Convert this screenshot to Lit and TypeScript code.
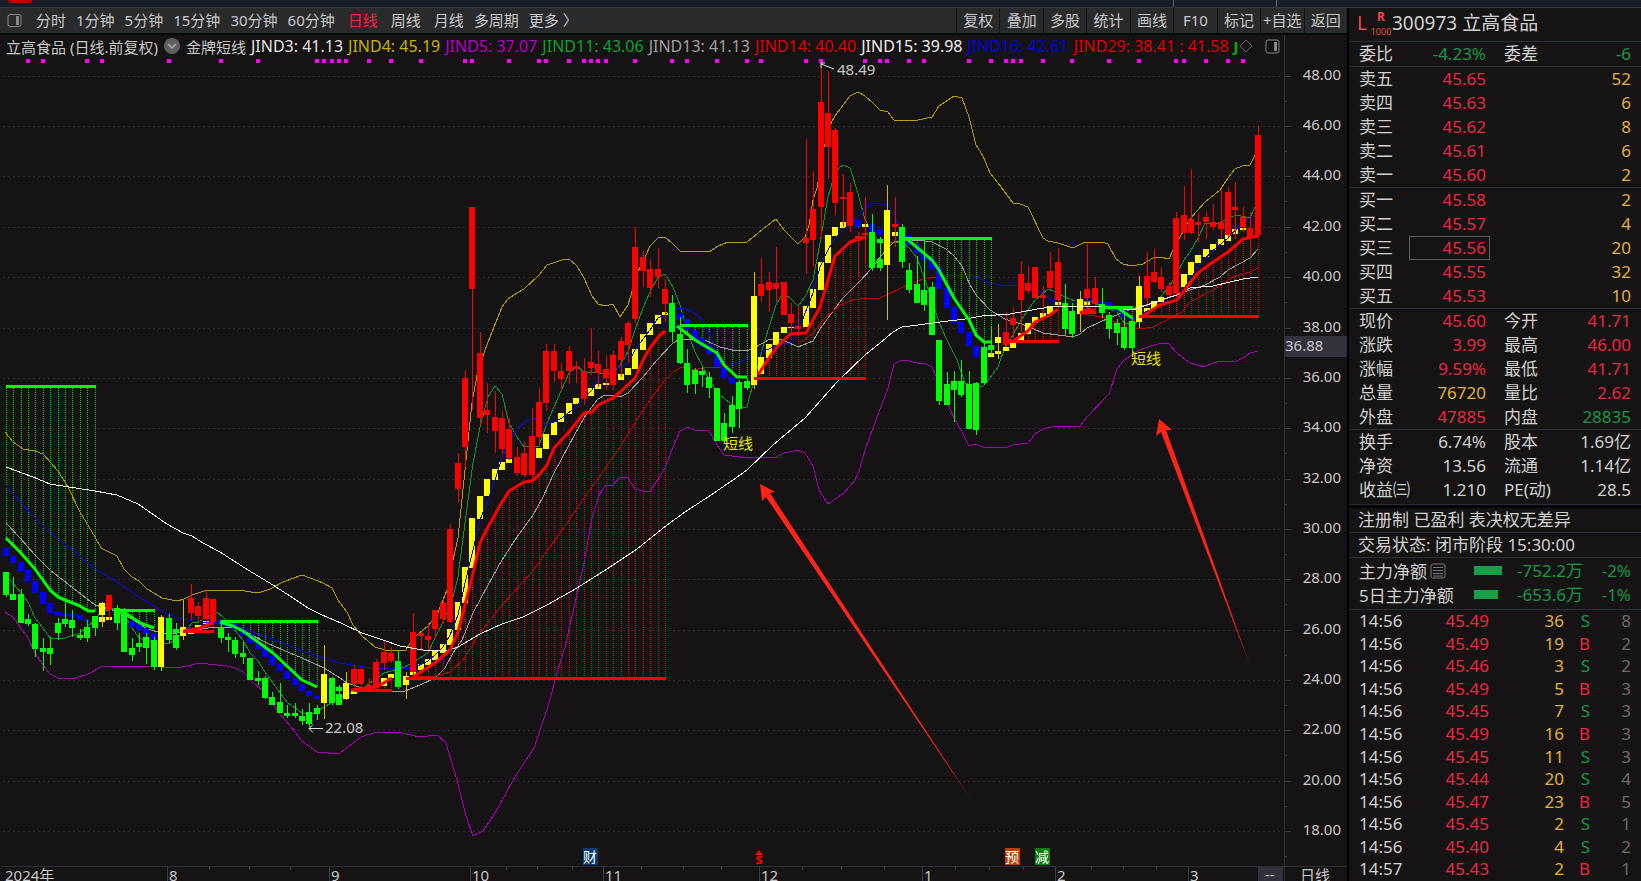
import { LitElement, html, svg, css } from "lit";
import { customElement } from "lit/decorators.js";

type Kind = "R" | "G" | "Y" | "B";

const COLORS: Record<Kind, string> = { R: "#ff0000", G: "#00ff00", Y: "#ffff00", B: "#0000ff" };

const barX = (i: number) => Math.round(5.7 + i * 7.408);
const priceY = (p: number) => Math.round(75.7 + (48 - p) * 25.18);

/* One candle per trading day: kind, high, body top, body bottom, low (canvas units). */
const CANDLES: [Kind, number, number, number, number][] = `
G 572 572 595 597|G 577 594 600 600|G 589 594 623 623|G 614 619 624 626|G 623 624 649 657|G 638 648 652 671
G 637 648 654 665|G 618 623 633 640|G 600 619 624 627|G 610 620 628 637|G 629 635 638 640|G 620 627 638 642
G 616 616 628 636|Y 602 603 615 627|R 595 595 610 620|G 605 608 623 630|G 608 613 652 652|G 638 648 655 661
G 633 643 647 652|G 633 637 648 664|G 637 640 667 670|Y 615 617 667 671|G 614 618 640 643|G 623 635 648 650
Y 600 627 636 640|R 584 598 613 620|R 602 606 616 622|R 590 598 619 625|R 599 599 622 625|G 623 627 638 643
G 633 637 640 652|G 637 640 654 658|G 642 653 657 664|G 658 658 680 680|G 671 678 681 685|G 676 678 698 699
G 692 697 705 705|G 683 702 713 713|G 705 713 716 718|G 703 713 716 718|G 709 716 721 725|G 703 712 724 727
G 705 708 714 720|Y 645 674 703 719|G 677 678 703 705|G 685 694 705 705|Y 672 683 699 700|R 665 669 684 690
R 668 669 684 688|R 678 685 687 692|R 659 662 687 688|R 640 652 663 670|R 647 653 661 663|G 650 661 687 689
Y 672 676 685 699|R 613 632 672 675|R 632 633 636 651|R 623 636 640 652|R 610 610 629 639|R 599 603 619 623
R 524 529 622 623|R 453 463 489 503|R 370 378 447 467|R 207 207 289 410|R 332 353 418 425|R 383 410 415 433
R 391 417 431 453|R 411 418 449 454|R 418 429 458 460|R 447 457 473 476|R 442 453 475 477|R 408 436 475 480
R 388 402 437 445|R 344 351 403 411|R 344 351 371 382|R 363 371 379 390|R 346 351 371 384|R 361 366 369 383
R 358 371 399 405|R 328 362 368 375|R 351 364 373 387|R 355 369 378 390|R 351 355 385 390|R 337 341 360 377
R 321 323 345 363|R 227 247 319 323|R 251 257 271 287|R 259 269 288 297|R 248 269 277 288|R 279 289 304 322
G 295 303 332 342|G 317 334 363 364|G 349 363 385 393|G 368 370 384 394|G 367 371 375 387|G 372 377 388 398
G 388 388 441 441|G 413 423 441 443|G 396 405 427 433|G 380 382 409 428|G 378 381 388 390|Y 272 296 385 389
R 258 284 296 302|R 272 282 290 312|R 247 283 289 302|R 282 282 315 315|R 303 314 323 333|R 306 326 329 333
R 139 238 243 274|R 171 209 240 267|R 66 102 207 238|R 71 113 147 179|R 128 130 203 215|R 174 197 199 227
R 183 192 226 232|R 232 236 241 278|R 197 233 235 263|G 214 232 268 271|G 237 259 268 271|Y 185 210 265 320
R 197 224 227 247|G 224 227 262 268|G 263 270 290 293|G 256 284 303 303|G 240 290 305 311|G 282 287 335 335
G 340 340 401 405|G 372 384 405 405|G 371 381 390 422|G 360 381 395 397|G 371 384 429 429|G 382 383 430 435
G 340 347 383 385|G 327 345 350 355|Y 324 337 343 359|R 312 332 345 347|R 307 318 325 338|R 261 274 300 335
R 266 283 291 294|R 267 267 298 298|R 286 295 298 315|R 252 271 288 290|R 248 262 300 308|G 284 303 329 336
G 303 311 334 338|Y 291 299 314 332|R 244 289 298 310|R 277 288 304 310|G 288 304 313 318|G 312 315 329 339
G 319 323 333 345|G 314 327 348 350|G 317 321 348 357|Y 276 286 322 328|R 252 276 298 307|R 249 272 282 283
R 267 277 289 292|R 282 286 295 298|R 212 218 294 297|R 186 215 233 240|R 169 219 233 234|R 213 222 225 242
R 212 217 222 239|R 204 222 227 230|R 190 222 229 238|R 187 192 235 237|R 182 207 210 239|R 207 217 227 232
R 212 228 237 257|R 126 135 235 237`
  .trim()
  .split(/[|\n]/)
  .map((row) => {
    const [k, ...n] = row.split(" ");
    const [a, b, c, d] = n.map(Number);
    return [k as Kind, a, b, c, d];
  });

/* Trend steps: day index, kind, top, bottom. */
const STEPS: [number, Kind, number, number][] = `
0 B 548 556|1 B 556 563|2 B 562 571|3 B 570 581|4 B 581 593|5 B 592 604|6 B 603 613|7 B 612 615|8 B 614 616|9 B 614 617|10 B 615 620|11 B 619 622
13 Y 617 622|14 Y 617 620|17 B 621 627|18 B 624 630|19 B 628 634|20 B 633 639|23 G 629 633|25 Y 629 634|26 Y 625 630|27 Y 621 624|28 B 620 623
29 B 619 625|30 B 622 627|31 B 623 630|32 B 628 635|33 B 634 643|34 B 642 649|35 B 648 657|36 B 656 665|37 B 664 671|38 B 671 679|39 B 678 685
40 B 684 691|41 B 691 696|42 B 696 699|45 G 687 691|47 Y 691 694|51 Y 678 686|52 Y 674 678|55 Y 671 675|56 Y 664 670|57 Y 659 665|58 Y 651 660
59 Y 644 653|60 Y 629 645|61 Y 602 630|62 Y 567 603|63 Y 518 568|64 Y 496 519|65 Y 479 496|66 Y 469 480|67 Y 462 470|68 Y 459 463|72 Y 448 458
73 Y 434 449|74 Y 422 435|75 Y 413 422|76 Y 403 414|77 Y 398 404|79 Y 388 396|80 Y 384 389|81 Y 383 385|83 Y 374 380|84 Y 368 375|85 Y 349 369
86 Y 334 350|87 Y 323 335|88 Y 315 324|89 Y 312 315|91 B 313 320|92 B 319 330|93 B 330 339|94 B 338 347|95 B 345 354|96 B 353 367|97 B 367 378
98 B 377 384|102 Y 357 374|103 Y 344 358|104 Y 332 345|105 Y 327 333|106 Y 327 328|108 Y 306 327|109 Y 289 308|110 Y 262 290|111 Y 235 263
112 Y 227 236|113 Y 222 228|115 B 220 227|116 Y 224 227|117 B 224 232|118 B 229 235|118 G 239 243|120 Y 232 236|122 B 236 245|123 B 244 253
124 B 252 260|125 B 258 269|126 B 268 289|127 B 288 308|128 B 307 323|129 B 322 333|130 B 332 346|131 B 346 357|133 Y 353 357|134 Y 351 354
135 Y 347 351|136 Y 342 348|137 Y 333 341|138 Y 323 334|139 Y 317 323|140 Y 313 318|141 Y 306 314|142 Y 302 305|146 Y 302 305|148 B 302 305
149 B 302 307|150 B 305 312|151 B 310 317|152 B 317 320|154 Y 308 313|155 Y 301 309|156 Y 297 302|159 Y 274 287|160 Y 262 275|161 Y 255 263
162 Y 249 257|163 Y 244 250|164 Y 239 245|165 Y 235 241|166 Y 229 234|167 Y 228 230`
  .trim()
  .split(/[|\n]/)
  .map((row) => {
    const [i, k, a, b] = row.split(" ");
    return [Number(i), k as Kind, Number(a), Number(b)];
  });

/* Shaded zones: horizontal level, first and last day, and the heavy trend line facing it. */
const ZONES: { k: Kind; y: number; from: number; to: number; line: string }[] = [
  { k: "G", y: 386, from: 0, to: 12, line: "6,538 20,552 35,569 50,590 58,597 65,600 80,606 88,611 95,611" },
  { k: "G", y: 610, from: 15, to: 20, line: "116,609 127,614 140,623 154,628" },
  { k: "R", y: 631, from: 24, to: 28, line: "184,631 200,628 213,623" },
  { k: "G", y: 621, from: 29, to: 42, line: "220,622 233,626 243,631 258,642 273,653 288,667 302,680 317,687" },
  { k: "R", y: 690, from: 47, to: 52, line: "351,690 377,687 392,678" },
  { k: "R", y: 678, from: 54, to: 89, line: "413,677 427,668 435,663 450,650 458,632 465,605 473,573 480,543 488,527 502,502 509,491 524,482 532,481 539,475 547,465 554,448 569,432 584,413 592,412 598,405 613,398 620,392 635,378 643,360 650,348 660,335 665,331" },
  { k: "G", y: 325, from: 91, to: 100, line: "677,326 695,340 717,353 724,365 737,377 747,377" },
  { k: "R", y: 378, from: 101, to: 116, line: "758,375 769,358 776,348 790,334 806,333 820,307 828,280 835,256 850,242 865,237" },
  { k: "G", y: 238, from: 121, to: 133, line: "907,239 932,260 939,270 954,298 969,320 976,335 984,342 991,342" },
  { k: "R", y: 341, from: 135, to: 142, line: "1013,341 1028,331 1035,322 1050,315 1058,309" },
  { k: "R", y: 312, from: 145, to: 147, line: "1080,313 1088,309 1095,311" },
  { k: "G", y: 307, from: 148, to: 152, line: "1103,307 1118,308 1132,318" },
  { k: "R", y: 316, from: 153, to: 169, line: "1143,316 1160,305 1177,300 1190,283 1198,273 1213,262 1228,252 1243,239 1258,236" },
];

const BACK_LINES = [
  { c: "#b8a000", p: "5,432 13,442 23,449 35,451 43,454 58,471 68,487 80,512 95,537 101,548 117,556 124,569 132,577 139,581 147,589 154,593 162,598 177,601 184,599 192,595 207,590 238,590 258,593 270,589 283,582 302,575 310,578 323,583 332,588 338,600 347,612 353,625 362,636 375,647 385,650 406,650 413,638 428,626 437,615 447,590 453,560 458,538 465,470 472,403 478,370 483,356 488,342 502,307 508,299 517,293 524,289 539,275 547,265 562,260 569,259 577,266 584,278 592,296 598,304 605,306 613,304 620,317 628,305 633,288 635,277 643,262 650,246 658,238 665,237 673,244 680,251 709,252 718,246 728,242 747,242 763,229 776,219 784,230 798,244 805,237 809,225 813,200 817,188 824,147 832,121 837,113 850,96 858,92 865,96 873,103 880,110 888,112 894,120 918,120 932,117 939,106 954,96 962,98 969,117 976,145 983,156 990,173 998,183 1013,203 1020,204 1028,207 1043,238 1048,241 1058,243 1073,248 1085,242 1102,242 1108,244 1116,259 1123,264 1132,266 1143,264 1153,258 1160,257 1169,259 1173,250 1180,237 1190,219 1205,202 1220,190 1228,178 1235,169 1242,166 1250,165 1255,155 1258,142" },
  { c: "#a800b8", p: "5,612 13,617 20,627 28,638 35,653 43,665 50,674 58,678 75,678 88,674 101,667 120,666 147,666 177,668 187,666 199,663 227,666 235,668 243,672 253,682 265,693 280,714 295,732 302,741 317,752 325,752 332,754 340,753 361,737 377,732 398,732 419,737 437,735 446,743 457,780 466,816 473,836 483,831 497,810 513,780 534,748 549,703 557,673 565,647 575,603 584,563 592,518 598,498 605,485 613,485 620,477 628,478 635,489 643,491 650,491 658,479 665,468 673,447 680,431 688,427 694,430 709,431 717,445 724,455 747,458 776,457 784,453 798,450 805,453 813,466 819,490 828,504 844,493 855,480 860,468 865,450 873,428 888,388 894,364 902,360 909,361 917,363 924,363 932,367 939,383 946,400 954,418 962,432 969,446 975,444 983,447 1007,447 1013,445 1028,443 1035,434 1043,429 1055,426 1080,426 1087,417 1109,394 1117,369 1124,360 1139,350 1154,345 1162,343 1169,344 1177,353 1190,363 1204,367 1213,363 1220,361 1235,362 1243,358 1250,353 1258,351" },
  { c: "#109830", p: "6,576 13,583 28,602 35,618 43,628 50,638 65,638 80,633 95,620 101,612 116,608 124,615 132,628 139,638 154,643 170,643 184,633 192,623 199,622 206,617 217,612 223,617 233,628 243,640 250,653 258,661 265,672 273,683 280,693 288,703 302,713 312,714 324,707 333,702 340,697 362,690 370,683 384,673 405,667 428,653 435,638 443,622 453,597 458,577 465,523 473,463 480,427 488,397 495,386 502,394 509,423 517,437 524,447 539,446 547,423 554,407 569,373 577,366 584,372 598,373 613,374 620,365 628,352 635,330 643,308 650,292 658,277 665,274 673,287 680,305 688,333 695,352 702,365 709,380 720,395 735,407 747,407 754,380 762,350 769,327 776,305 783,293 790,298 798,306 805,297 813,280 820,243 828,197 835,173 840,167 843,165 850,168 858,193 865,220 873,233 880,243 902,242 909,248 917,258 924,277 932,300 939,322 946,338 957,360 965,383 977,387 983,386 990,378 998,367 1005,347 1013,335 1020,322 1028,310 1035,300 1048,289 1058,293 1065,297 1075,301 1093,302 1102,307 1117,312 1124,323 1133,325 1142,318 1154,307 1162,295 1169,287 1177,273 1184,260 1190,252 1198,238 1205,223 1220,223 1228,218 1237,215 1250,218 1255,207" },
  { c: "#a0a0a0", p: "6,523 20,538 35,555 50,570 73,588 95,605 116,611 132,619 147,629 162,633 177,633 192,631 213,627 233,628 248,633 267,643 283,650 302,658 324,668 340,678 347,683 362,688 385,691 405,691 420,685 435,678 445,668 453,653 462,640 473,613 488,585 502,560 517,537 533,515 543,497 554,473 569,445 584,418 592,407 598,399 605,395 615,395 620,397 628,393 643,377 657,360 673,343 680,339 707,341 720,347 732,350 747,351 754,348 770,339 783,340 798,347 813,341 820,329 828,318 843,298 858,283 873,267 880,257 894,242 917,240 932,242 946,249 954,256 962,266 969,283 976,295 990,310 1005,319 1027,326 1043,333 1073,337 1080,334 1087,328 1109,318 1132,309 1160,301 1184,292 1205,285 1220,277 1228,270 1250,258 1258,249" },
  { c: "#c80000", p: "413,677 435,676 450,672 463,660 480,633 502,605 532,572 562,530 592,487 620,447 643,410 650,400 665,380 673,372 682,367 694,370 707,367 723,367" },
  { c: "#c80000", p: "800,343 813,333 825,318 840,305 853,300 867,298 880,298 903,287 923,279 938,277" },
  { c: "#c80000", p: "1080,314 1102,317 1117,323 1139,329 1153,327 1167,320 1182,312 1190,302 1213,290 1233,277 1250,272 1258,268" },
];

const BLUE_LINE = "6,486 20,502 35,518 50,533 73,550 95,569 116,581 139,597 162,611 177,618 192,621 213,623 243,628 263,636 280,642 302,651 317,656 340,663 370,668 397,669 413,668 428,661 435,655 443,647 450,635 458,615 465,583 473,550 480,520 488,500 495,480 502,458 509,443 517,428 532,418 539,420 547,425 562,418 577,406 584,398 592,390 598,380 605,373 620,367 628,363 635,350 650,330 658,318 665,315 673,308 683,308 694,313 702,319 709,333 717,353 722,365 732,365 740,362 754,355 776,346 790,343 798,333 805,313 813,293 820,267 828,250 835,238 843,230 858,217 865,208 873,203 888,205 894,215 902,232 917,250 932,263 943,276 957,275 973,276 990,283 1007,286 1027,284 1043,293 1050,300 1060,302 1077,301 1093,300 1109,303 1123,312 1132,318 1139,315 1154,308 1169,303 1177,298 1190,280 1198,267 1210,253 1228,238 1243,222 1250,218 1255,215";

const WHITE_LINE = "6,467 33,477 50,484 95,491 117,495 138,504 167,524 183,533 192,536 203,543 220,552 248,570 273,585 293,598 308,608 320,614 343,624 362,633 383,640 400,646 423,650 445,651 458,647 480,634 502,624 523,617 547,605 577,588 607,569 637,549 667,525 685,512 711,495 733,480 747,470 773,445 805,418 837,382 865,355 880,343 893,332 902,327 918,325 940,322 965,319 982,316 1010,314 1037,309 1057,306 1077,306 1103,307 1123,309 1133,310 1147,305 1167,298 1177,295 1190,288 1213,286 1243,279 1258,277";

const SIGNAL_DAYS = [3, 5, 11, 13, 22, 29, 34, 42, 43, 44, 45, 46, 49, 52, 56, 62, 63, 68, 72, 73, 76, 78, 79, 80, 81, 85, 90, 92, 96, 100, 102, 108, 110, 116, 118, 119, 122, 124, 130, 133, 135, 136, 137, 140, 144, 149, 153, 158, 159, 162, 165, 167];

const MONTHS: [number, string][] = [[168, "8"], [330, "9"], [471, "10"], [604, "11"], [760, "12"], [923, "1"], [1056, "2"], [1189, "3"]];
const WEEKS = [209, 249, 290, 506, 537, 572, 641, 683, 721, 802, 841, 884, 955, 989, 1023, 1091, 1123, 1156];
const PRICES = [48, 46, 44, 42, 40, 38, 36, 34, 32, 30, 28, 26, 24, 22, 20, 18];

function zoneHatch(z: (typeof ZONES)[number]) {
  const pts = z.line.split(" ").map((p) => p.split(",").map(Number));
  const at = (x: number) => {
    if (x <= pts[0][0]) return pts[0][1];
    for (let i = 1; i < pts.length; i++) {
      const [x0, y0] = pts[i - 1];
      const [x1, y1] = pts[i];
      if (x <= x1) return y0 + ((y1 - y0) * (x - x0)) / (x1 - x0);
    }
    return pts[pts.length - 1][1];
  };
  const out = [];
  for (let i = z.from; i <= z.to; i++) {
    const x = barX(i);
    out.push(svg`<line x1=${x} x2=${x} y1=${z.y} y2=${Math.round(at(x))} stroke=${z.k === "G" ? "#00e000" : "#ff0000"} stroke-dasharray="1 1"/>`);
  }
  return out;
}

@customElement("price-chart")
class PriceChart extends LitElement {
  static styles = css`
    :host { display: block; flex: 1; min-height: 0; }
    svg { display: block; width: 100%; height: 100%; font-family: "Noto Sans", "Noto Sans CJK SC", sans-serif; }
    .label { font-size: 15px; fill: #c8c8c8; }
    .note { font-size: 15px; fill: #e8e800; }
    .tag { font-size: 14px; fill: #ffffff; text-anchor: middle; }
    .price { text-anchor: end; }
    .flat { fill: none; shape-rendering: crispEdges; }
    .crisp { shape-rendering: crispEdges; }
    .heavy { fill: none; stroke-width: 3; stroke-linejoin: round; }
  `;

  render() {
    return html`<svg viewBox="0 57 1347 824" preserveAspectRatio="xMinYMin meet" role="img" aria-label="立高食品 日线">
      <defs>
        <linearGradient id="fade1" gradientUnits="userSpaceOnUse" x1="760" y1="484" x2="973" y2="803">
          <stop offset="0.9" stop-color="#ff2418"/><stop offset="1" stop-color="#ff2418" stop-opacity="0.4"/>
        </linearGradient>
        <linearGradient id="fade2" gradientUnits="userSpaceOnUse" x1="1159" y1="419" x2="1250" y2="666">
          <stop offset="0.9" stop-color="#ff2418"/><stop offset="1" stop-color="#ff2418" stop-opacity="0.4"/>
        </linearGradient>
      </defs>
      <g class="crisp">
        ${PRICES.map((p) => {
          const y = priceY(p);
          return svg`<line x1="3" x2="1283" y1=${y + 0.5} y2=${y + 0.5} stroke="#2e2e32" stroke-dasharray="2 3"/>
            <line x1="1284" x2="1291" y1=${y + 0.5} y2=${y + 0.5} stroke="#3a3c44"/>
            <line x1="1284" x2="1287" y1=${y + 25.5} y2=${y + 25.5} stroke="#3a3c44"/>`;
        })}
        <rect x="1284" y="57" width="1" height="824" fill="#2c3038"/>
        <rect x="1" y="866" width="1346" height="1" fill="#2c3038"/>
        ${MONTHS.map(([x]) => svg`<rect x=${x - 1} y="867" width="1" height="14" fill="#3a3e46"/>`)}
        ${WEEKS.map((x) => svg`<rect x=${x} y="867" width="1" height="3" fill="#3a3e46"/>`)}
        ${SIGNAL_DAYS.map((i) => svg`<rect x=${barX(i) - 2} y="59" width="4" height="4" fill="#ff00ff"/>`)}
        ${ZONES.map(zoneHatch)}
        ${BACK_LINES.map((l) => svg`<polyline class="flat" points=${l.p} stroke=${l.c}/>`)}
        ${STEPS.map(([i, k, a, b]) => svg`<rect x=${barX(i) - 3} y=${a} width="6" height=${b - a} fill=${COLORS[k]}/>`)}
        <polyline class="flat" points=${BLUE_LINE} stroke="#0808e0"/>
        ${CANDLES.map(([k, h, a, b, l], i) => {
          const x = barX(i);
          return svg`<rect x=${x} y=${h} width="1" height=${Math.max(l - h, 1)} fill=${k === "Y" ? "#d0c000" : COLORS[k]}/>
            <rect x=${x - 3} y=${a} width="6" height=${b - a} fill=${COLORS[k]}/>`;
        })}
        <polyline class="flat" points=${WHITE_LINE} stroke="#f0f0f0"/>
      </g>
      ${ZONES.map((z) => svg`<polyline class="heavy" points=${z.line} stroke=${COLORS[z.k]}/>
        <rect x=${barX(z.from)} y=${z.y - 1} width=${barX(z.to) - barX(z.from) + 1} height="3" fill=${COLORS[z.k]}/>`)}
      <path d="M760 484L775 492L770 493L974 804L766 497L762 501Z" fill="url(#fade1)"/>
      <path d="M1159 419L1172 430L1166 430L1251 668L1161 432L1156 436Z" fill="url(#fade2)"/>

      <path d="M834 69L821 64M821 68V63H825" fill="none" stroke="#e0e0e0"/>
      <text class="label" x="837" y="75">48.49</text>
      <path d="M323 728.5H309M313 724.5L309 728.5L313 732.5" fill="none" stroke="#e0e0e0"/>
      <text class="label" x="325" y="733">22.08</text>
      <text class="note" x="723" y="449">短线</text>
      <text class="note" x="1131" y="364">短线</text>

      ${PRICES.map((p) => svg`<text class="label price" x="1341" y=${priceY(p) + 4}>${p.toFixed(2)}</text>`)}
      <rect x="1285" y="336" width="62" height="21" fill="#33313c"/>
      <text class="label" x="1285" y="351">36.88</text>

      <rect x="583" y="848" width="15" height="17" fill="#0a3c70"/><text class="tag" x="590" y="862">财</text>
      <path d="M759 850L763 855H755Z" fill="#ff0000"/>
      <text x="759" y="864" font-size="15" font-weight="700" text-anchor="middle" fill="#ff0000">s</text>
      <rect x="1005" y="848" width="15" height="17" fill="#b84008"/><text class="tag" x="1012" y="862">预</text>
      <rect x="1035" y="848" width="15" height="17" fill="#088008"/><text class="tag" x="1042" y="862">减</text>

      <rect x="1258" y="867" width="25" height="14" fill="#33313c"/>
      <text class="label" x="5" y="881">2024年</text>
      ${MONTHS.map(([x, t]) => svg`<text class="label" x=${x + 1} y="881">${t}</text>`)}
      <text class="label" x="1265" y="880">--</text>
      <text class="label" x="1300" y="881">日线</text>
    </svg>`;
  }
}

const PERIODS = ["分时", "1分钟", "5分钟", "15分钟", "30分钟", "60分钟", "日线", "周线", "月线", "多周期"];
const TOOLS = ["复权", "叠加", "多股", "统计", "画线", "F10", "标记", "+自选", "返回"];
const LEGEND: [string, string][] = [
  ["JIND3: 41.13", "#e4e4e4"],
  ["JIND4: 45.19", "#c8b400"],
  ["JIND5: 37.07", "#b400c8"],
  ["JIND11: 43.06", "#10a030"],
  ["JIND13: 41.13", "#a0a0a0"],
  ["JIND14: 40.40", "#e00000"],
  ["JIND15: 39.98", "#f0f0f0"],
  ["JIND16: 42.61", "#0000e0"],
  ["JIND29: 38.41 : 41.58", "#e00000"],
];

const SELLS = [["卖五", "45.65", "52"], ["卖四", "45.63", "6"], ["卖三", "45.62", "8"], ["卖二", "45.61", "6"], ["卖一", "45.60", "2"]];
const BUYS = [["买一", "45.58", "2"], ["买二", "45.57", "4"], ["买三", "45.56", "20"], ["买四", "45.55", "32"], ["买五", "45.53", "10"]];
const SUMMARY = [
  ["现价", "45.60", "red", "今开", "41.71", "red"],
  ["涨跌", "3.99", "red", "最高", "46.00", "red"],
  ["涨幅", "9.59%", "red", "最低", "41.71", "red"],
  ["总量", "76720", "gold", "量比", "2.62", "red"],
  ["外盘", "47885", "red", "内盘", "28835", "green"],
];
const BASICS = [
  ["换手", "6.74%", "", "股本", "1.69亿", ""],
  ["净资", "13.56", "", "流通", "1.14亿", ""],
  ["收益㈢", "1.210", "", "PE(动)", "28.5", ""],
];
const TRADES = [
  ["14:56", "45.49", "36", "S", "8"], ["14:56", "45.49", "19", "B", "2"], ["14:56", "45.46", "3", "S", "2"],
  ["14:56", "45.49", "5", "B", "3"], ["14:56", "45.45", "7", "S", "3"], ["14:56", "45.49", "16", "B", "3"],
  ["14:56", "45.45", "11", "S", "3"], ["14:56", "45.44", "20", "S", "4"], ["14:56", "45.47", "23", "B", "5"],
  ["14:56", "45.45", "2", "S", "1"], ["14:56", "45.40", "4", "S", "2"], ["14:57", "45.43", "2", "B", "1"],
];

@customElement("quote-panel")
class QuotePanel extends LitElement {
  static styles = css`
    :host { display: flex; flex-direction: column; flex: 0 0 292px; background: #151314; color: #d0d0d0; font-size: 17px; line-height: 23px; white-space: nowrap; }
    .title { display: flex; align-items: center; box-sizing: border-box; height: 34px; padding: 0 0 2px 8px; font-size: 19px; border-bottom: 1px solid #2a2e36; }
    .flag-l { width: 13px; color: #f04848; font-size: 19px; }
    .flag-r { width: 22px; display: grid; color: #f04848; font-size: 12px; line-height: 16px; text-align: center; font-weight: 700; }
    .flag-r small { font-size: 9px; font-weight: 400; line-height: 13px; }
    table { display: block; border-bottom: 1px solid #2a2e36; }
    tbody { display: block; }
    tr { display: grid; grid-template-columns: 50px 77px 1fr 74px; padding: 0 10px; height: 24px; }
    th, td { padding: 0; font-weight: 400; text-align: right; }
    th { text-align: left; }
    th.second { padding-left: 18px; }
    .basics { padding-bottom: 2px; box-shadow: 0 3px #000; margin-bottom: 3px; }
    .price { color: #e82840; }
    .picked { outline: 1px solid #5c5c5c; outline-offset: -1px; margin-right: -4px; padding-right: 4px; }
    .book td:last-child { grid-column: 4; }
    .red { color: #e82840; }
    .green { color: #189848; }
    .gold { color: #e0b040; }
    .line { padding: 0 9px 1px; border-bottom: 1px solid #2a2e36; }
    .flow { padding: 1px 0 2px; }
    .flow tr { grid-template-columns: 115px 29px 80px 1fr; }
    .flow th { display: flex; align-items: center; gap: 3px; }
    .bar { display: block; height: 9px; margin-top: 7px; background: #18a048; }
    .trades { flex: 1; border: 0; }
    .trades tbody { display: grid; grid-template-rows: repeat(12, 1fr); height: 100%; }
    .trades tr { grid-template-columns: 44px 86px 75px 26px 1fr; height: auto; line-height: 22px; }
    .trades .count { color: #6c6c6c; }
  `;

  book(rows: string[][]) {
    return html`<table class="book"><tbody>
      ${rows.map(([n, p, v]) => html`<tr><th scope="row">${n}</th><td class="price ${p === "45.56" ? "picked" : ""}">${p}</td><td class="gold">${v}</td></tr>`)}
    </tbody></table>`;
  }

  pairs(rows: string[][], cls: string) {
    return html`<table class=${cls}><tbody>
      ${rows.map(([a, b, bc, c, d, dc]) => html`<tr><th scope="row">${a}</th><td class=${bc}>${b}</td><th scope="row" class="second">${c}</th><td class=${dc}>${d}</td></tr>`)}
    </tbody></table>`;
  }

  render() {
    return html`
      <div class="title"><span class="flag-l">L</span><span class="flag-r">R<small>1000</small></span><span>300973 立高食品</span></div>
      ${this.pairs([["委比", "-4.23%", "green", "委差", "-6", "green"]], "ratio")}
      ${this.book(SELLS)} ${this.book(BUYS)}
      ${this.pairs(SUMMARY, "summary")} ${this.pairs(BASICS, "basics")}
      <div class="line">注册制 已盈利 表决权无差异</div>
      <div class="line">交易状态: 闭市阶段 15:30:00</div>
      <table class="flow"><tbody>
        <tr><th scope="row">主力净额<svg width="16" height="16" viewBox="0 0 16 16" fill="none" stroke="#787878"><rect x="1" y="1" width="14" height="14" rx="2"/><path d="M3 4.5H13M3 7.5H13M3 10.5H13M3 13H13"/></svg></th>
          <td><span class="bar" style="width:28px"></span></td><td class="green">-752.2万</td><td class="green">-2%</td></tr>
        <tr><th scope="row">5日主力净额</th><td><span class="bar" style="width:24px"></span></td><td class="green">-653.6万</td><td class="green">-1%</td></tr>
      </tbody></table>
      <table class="trades"><tbody>
        ${TRADES.map(([t, p, v, s, n]) => html`<tr><th scope="row">${t}</th><td class="red">${p}</td><td class="gold">${v}</td><td class=${s === "S" ? "green" : "red"}>${s}</td><td class="count">${n}</td></tr>`)}
      </tbody></table>`;
  }
}

@customElement("app-root")
class AppRoot extends LitElement {
  static styles = css`
    :host { display: flex; flex-direction: column; height: 100vh; overflow: hidden; background: #151314; color: #c8c8c8; font-family: "Noto Sans", "Noto Sans CJK SC", sans-serif; font-size: 15px; }
    .strip { display: flex; flex: none; height: 7px; background: #171d26; border-bottom: 1px solid #303640; padding-left: 8px; }
    .logo { width: 24px; height: 3px; border-radius: 0 0 4px 4px; background: #c00000; }
    .strip i { width: 1px; background: #5c6068; margin-left: auto; }
    .strip i + i { margin: 0 364px 0 102px; }
    .body { display: flex; flex: 1; min-height: 0; }
    .main { display: flex; flex-direction: column; flex: 1; min-width: 0; border-right: 2px solid #000; }
    .bar { display: flex; align-items: stretch; flex: none; height: 25px; background: #282a2c; border-bottom: 2px solid #080808; }
    button { font: inherit; color: inherit; background: none; border: 0; padding: 0; white-space: nowrap; line-height: 25px; }
    .periods { display: flex; align-items: center; gap: 10px; flex: 1; padding-left: 7px; }
    .periods svg { margin-right: 4px; }
    .periods .wide { margin-left: 3px; }
    .on { color: #e82840; }
    .tools { display: grid; grid-template-columns: repeat(9, 1fr); flex: 0 0 391px; }
    .tools button { border-left: 1px solid #141414; }
    .legend { display: flex; align-items: center; flex: none; height: 22px; margin-right: 62px; border-right: 1px solid #2c3038; padding-left: 6px; gap: 5px; white-space: nowrap; overflow: hidden; }
    .legend > * { flex: none; }
    .name { display: flex; align-items: center; gap: 6px; }
    .value { font-size: 16px; line-height: 20px; }
    .end { display: flex; align-items: center; }
    .more { color: #00b000; font-weight: 700; }
    .pane { margin-left: auto; margin-right: 4px; }
  `;

  render() {
    return html`
      <div class="strip"><span class="logo"></span><i></i><i></i></div>
      <div class="body">
        <div class="main">
          <div class="bar">
            <nav class="periods">
              <svg width="15" height="15" viewBox="0 0 15 15" fill="none" stroke="#888"><rect x="1" y="1.5" width="13" height="12" rx="2"/><rect x="9" y="3" width="3" height="9" fill="#888" stroke="none"/></svg>
              ${PERIODS.map((p) => html`<button class="${p.endsWith("线") ? "wide" : ""} ${p === "日线" ? "on" : ""}">${p}</button>`)}
              <button>更多 〉</button>
            </nav>
            <div class="tools">${TOOLS.map((t) => html`<button>${t}</button>`)}</div>
          </div>
          <div class="legend">
            <span class="name">
              <span>立高食品 (日线.前复权)</span>
              <svg width="16" height="16" viewBox="0 0 16 16"><circle cx="8" cy="8" r="8" fill="#606060"/><path d="M4 6L8 10L12 6" fill="none" stroke="#b0b0b0" stroke-width="1.5"/></svg>
              <span>金牌短线</span>
            </span>
            ${LEGEND.map(([t, c]) => html`<span class="value" style="color:${c}">${t}</span>`)}
            <span class="end"><span class="more">J</span><svg width="14" height="14" viewBox="0 0 14 14" fill="none" stroke="#606060"><path d="M7 1L13 7L7 13L1 7Z"/></svg></span>
            <svg class="pane" width="15" height="15" viewBox="0 0 15 15" fill="none" stroke="#888"><rect x="1" y="1" width="13" height="13" rx="2"/><rect x="9" y="3" width="3" height="9" fill="#888" stroke="none"/></svg>
          </div>
          <price-chart></price-chart>
        </div>
        <quote-panel></quote-panel>
      </div>`;
  }
}
